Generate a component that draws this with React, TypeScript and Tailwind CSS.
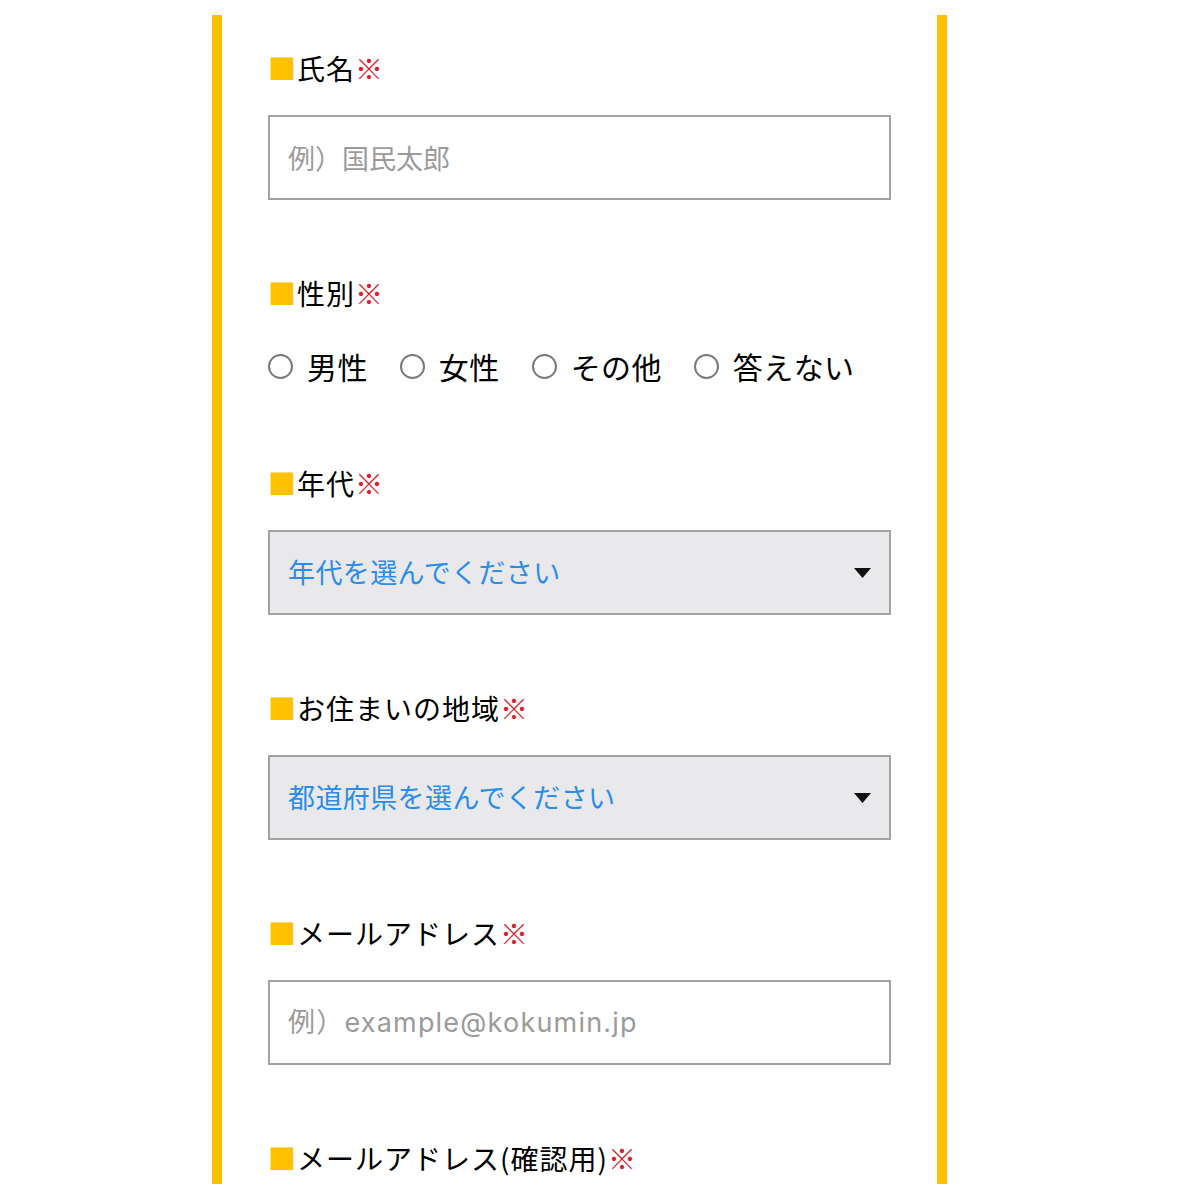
const font = { fontFamily: '"Noto Sans CJK JP", "Noto Sans", sans-serif' };
const latinFont = { fontFamily: 'Inter, "Noto Sans CJK JP", sans-serif', letterSpacing: '1.2px' };

function Label({ text }: { text: string }) {
  return (
    <div className="flex items-center h-[40px] text-[28px] leading-[40px] tracking-[1px] text-black">
      <span className="text-[#ffc000]">■</span>
      <span>{text}</span>
      <span className="text-[#d9202c]">※</span>
    </div>
  );
}

function TextInput({ placeholder, latin }: { placeholder: string; latin?: boolean }) {
  return (
    <input
      type="text"
      placeholder={placeholder}
      style={latin ? latinFont : undefined}
      className="mt-[27px] block w-full h-[85px] border-2 border-[#a3a3a3] bg-white px-[18px] text-[27px] text-black placeholder:text-[#9b9b9b] outline-none"
    />
  );
}

function SelectBox({ placeholder }: { placeholder: string }) {
  return (
    <div className="relative mt-[27px]">
      <select
        defaultValue=""
        className="block w-full h-[85px] appearance-none border-2 border-[#a3a3a3] bg-[#e9e9eb] px-[18px] text-[27px] tracking-[0.4px] text-[#2a8cec] outline-none rounded-none"
      >
        <option value="">{placeholder}</option>
      </select>
      <svg
        className="absolute right-[20px] top-1/2 -translate-y-1/2 pointer-events-none"
        width="17"
        height="10"
        viewBox="0 0 17 10"
      >
        <path d="M0 0 H17 L8.5 10 Z" fill="#111" />
      </svg>
    </div>
  );
}

const genders = ['男性', '女性', 'その他', '答えない'];

export default function App() {
  return (
    <div className="bg-white w-[1200px] h-[1200px] pt-[15px]" style={font}>
      <div className="ml-[212px] w-[735px] h-[1169px] overflow-hidden border-x-[10px] border-[#ffc000] px-[46px] pt-[33px]">
        <Label text="氏名" />
        <TextInput placeholder="例）国民太郎" />

        <div className="mt-[73px]">
          <Label text="性別" />
          <div className="mt-[33px] flex items-center h-[40px]">
            {genders.map((g, i) => (
              <label key={g} className={`flex items-center ${i > 0 ? 'ml-[32px]' : ''}`}>
                <input
                  type="radio"
                  name="gender"
                  className="appearance-none w-[25px] h-[25px] rounded-full border-2 border-[#7a7a7a] bg-white m-0"
                />
                <span className="ml-[14px] text-[30px] leading-[40px] tracking-[0.4px] text-black">{g}</span>
              </label>
            ))}
          </div>
        </div>

        <div className="mt-[77px]">
          <Label text="年代" />
          <SelectBox placeholder="年代を選んでください" />
        </div>

        <div className="mt-[73px]">
          <Label text="お住まいの地域" />
          <SelectBox placeholder="都道府県を選んでください" />
        </div>

        <div className="mt-[73px]">
          <Label text="メールアドレス" />
          <TextInput placeholder="例）example@kokumin.jp" latin />
        </div>

        <div className="mt-[73px]">
          <Label text="メールアドレス(確認用)" />
          <TextInput placeholder="例）example@kokumin.jp" latin />
        </div>
      </div>
    </div>
  );
}
